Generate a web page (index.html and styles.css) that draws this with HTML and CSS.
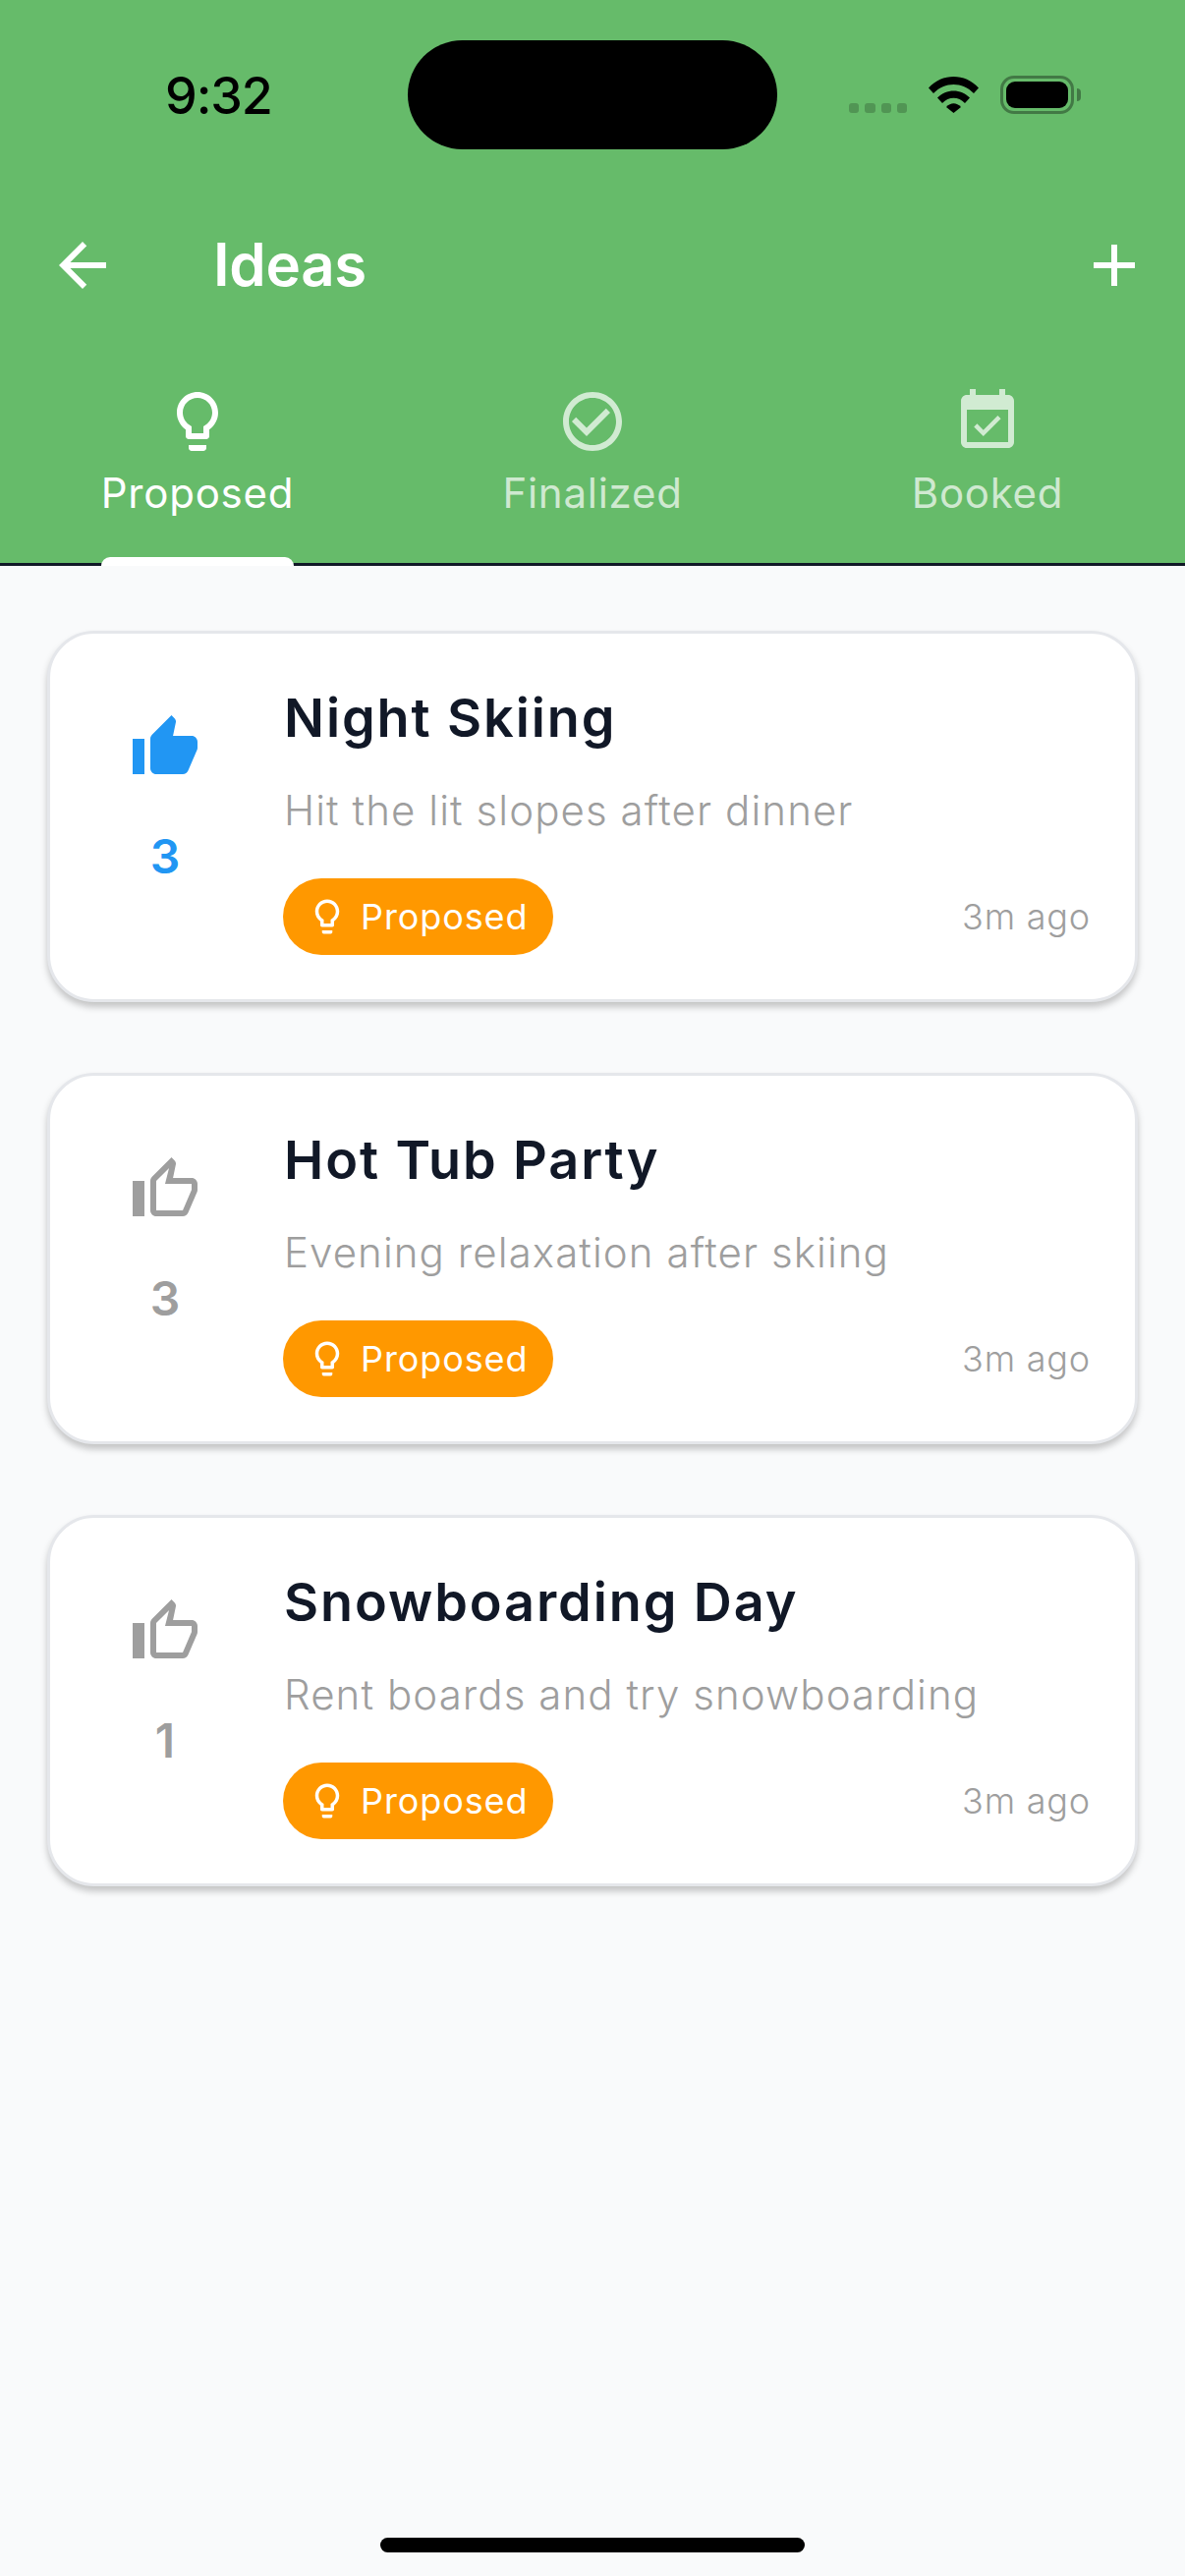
FILE: index.html
```html
<!DOCTYPE html>
<html lang="en">
<head>
<meta charset="utf-8">
<title>Ideas</title>
<link rel="stylesheet" href="styles.css">
</head>
<body>
<div class="page">
  <header class="header">
    <div class="status">
      <span class="time">9:32</span>
      <div class="island"></div>
      <div class="sys">
        <div class="dots"><i></i><i></i><i></i><i></i></div>
        <svg class="wifi" viewBox="0 0 51 37"><path d="M0 11.5C14-3.8 37-3.8 51 11.5L46 17C34.5 5 16.5 5 5 17Z"/><path d="M9 21.5C18 12 33 12 42 21.5L37 27C30.5 20 20.5 20 14 27Z"/><path d="M18 31C22.5 26 28.5 26 33 31L25.5 37Z"/></svg>
        <div class="battery"><div class="battery-fill"></div></div>
        <div class="battery-cap"></div>
      </div>
    </div>
    <div class="appbar">
      <svg class="icon" viewBox="0 0 24 24"><path d="M20 11H7.83l5.59-5.59L12 4l-8 8 8 8 1.41-1.41L7.83 13H20v-2z"/></svg>
      <h1 class="title">Ideas</h1>
      <svg class="icon" viewBox="0 0 24 24"><path d="M19 13h-6v6h-2v-6H5v-2h6V5h2v6h6v2z"/></svg>
    </div>
    <nav class="tabs">
      <div class="tab tab-active">
        <svg class="icon" viewBox="0 0 24 24"><path d="M9 21c0 .55.45 1 1 1h4c.55 0 1-.45 1-1v-1H9v1zm3-19C8.14 2 5 5.14 5 9c0 2.38 1.19 4.47 3 5.74V17c0 .55.45 1 1 1h6c.55 0 1-.45 1-1v-2.26c1.81-1.27 3-3.36 3-5.74 0-3.86-3.14-7-7-7zm2.85 11.1l-.85.6V16h-4v-2.3l-.85-.6C7.8 12.16 7 10.63 7 9c0-2.76 2.24-5 5-5s5 2.24 5 5c0 1.63-.8 3.16-2.15 4.1z"/></svg>
        <span class="tab-label">Proposed</span>
        <div class="indicator"></div>
      </div>
      <div class="tab">
        <svg class="icon" viewBox="0 0 24 24"><path d="M16.59 7.58L10 14.17l-3.59-3.58L5 12l5 5 8-8zM12 2C6.48 2 2 6.48 2 12s4.48 10 10 10 10-4.48 10-10S17.52 2 12 2zm0 18c-4.42 0-8-3.58-8-8s3.58-8 8-8 8 3.58 8 8-3.58 8-8 8z"/></svg>
        <span class="tab-label">Finalized</span>
      </div>
      <div class="tab">
        <svg class="icon" viewBox="0 0 24 24"><path d="M16.53 11.06L15.47 10l-4.88 4.88-2.12-2.12-1.06 1.06L10.59 17l5.94-5.94zM19 3h-1V1h-2v2H8V1H6v2H5c-1.11 0-1.99.9-1.99 2L3 19c0 1.1.89 2 2 2h14c1.1 0 2-.9 2-2V5c0-1.1-.9-2-2-2zm0 16H5V8h14v11z"/></svg>
        <span class="tab-label">Booked</span>
      </div>
    </nav>
  </header>

  <main class="list">
    <article class="card">
      <div class="vote vote-on">
        <svg class="icon" viewBox="0 0 24 24"><path d="M1 21h4V9H1v12zm22-11c0-1.1-.9-2-2-2h-6.31l.95-4.57.03-.32c0-.41-.17-.79-.44-1.06L14.17 1 7.59 7.59C7.22 7.95 7 8.45 7 9v10c0 1.1.9 2 2 2h9c.83 0 1.54-.5 1.84-1.22l3.02-7.05c.09-.23.14-.47.14-.73v-2z"/></svg>
        <span class="count">3</span>
      </div>
      <div class="body">
        <h2 class="card-title">Night Skiing</h2>
        <p class="desc">Hit the lit slopes after dinner</p>
        <div class="meta">
          <span class="chip">
            <svg class="chip-icon" viewBox="0 0 24 24"><path d="M9 21c0 .55.45 1 1 1h4c.55 0 1-.45 1-1v-1H9v1zm3-19C8.14 2 5 5.14 5 9c0 2.38 1.19 4.47 3 5.74V17c0 .55.45 1 1 1h6c.55 0 1-.45 1-1v-2.26c1.81-1.27 3-3.36 3-5.74 0-3.86-3.14-7-7-7zm2.85 11.1l-.85.6V16h-4v-2.3l-.85-.6C7.8 12.16 7 10.63 7 9c0-2.76 2.24-5 5-5s5 2.24 5 5c0 1.63-.8 3.16-2.15 4.1z"/></svg>
            Proposed
          </span>
          <span class="ago">3m ago</span>
        </div>
      </div>
    </article>

    <article class="card">
      <div class="vote">
        <svg class="icon" viewBox="0 0 24 24"><path d="M9 21h9c.83 0 1.54-.5 1.84-1.22l3.02-7.05c.09-.23.14-.47.14-.73v-2c0-1.1-.9-2-2-2h-6.31l.95-4.57.03-.32c0-.41-.17-.79-.44-1.06L14.17 1 7.58 7.59C7.22 7.95 7 8.45 7 9v10c0 1.1.9 2 2 2zM9 9l4.34-4.34L12 10h9v2l-3 7H9V9zM1 9h4v12H1z"/></svg>
        <span class="count">3</span>
      </div>
      <div class="body">
        <h2 class="card-title">Hot Tub Party</h2>
        <p class="desc">Evening relaxation after skiing</p>
        <div class="meta">
          <span class="chip">
            <svg class="chip-icon" viewBox="0 0 24 24"><path d="M9 21c0 .55.45 1 1 1h4c.55 0 1-.45 1-1v-1H9v1zm3-19C8.14 2 5 5.14 5 9c0 2.38 1.19 4.47 3 5.74V17c0 .55.45 1 1 1h6c.55 0 1-.45 1-1v-2.26c1.81-1.27 3-3.36 3-5.74 0-3.86-3.14-7-7-7zm2.85 11.1l-.85.6V16h-4v-2.3l-.85-.6C7.8 12.16 7 10.63 7 9c0-2.76 2.24-5 5-5s5 2.24 5 5c0 1.63-.8 3.16-2.15 4.1z"/></svg>
            Proposed
          </span>
          <span class="ago">3m ago</span>
        </div>
      </div>
    </article>

    <article class="card">
      <div class="vote">
        <svg class="icon" viewBox="0 0 24 24"><path d="M9 21h9c.83 0 1.54-.5 1.84-1.22l3.02-7.05c.09-.23.14-.47.14-.73v-2c0-1.1-.9-2-2-2h-6.31l.95-4.57.03-.32c0-.41-.17-.79-.44-1.06L14.17 1 7.58 7.59C7.22 7.95 7 8.45 7 9v10c0 1.1.9 2 2 2zM9 9l4.34-4.34L12 10h9v2l-3 7H9V9zM1 9h4v12H1z"/></svg>
        <span class="count">1</span>
      </div>
      <div class="body">
        <h2 class="card-title">Snowboarding Day</h2>
        <p class="desc">Rent boards and try snowboarding</p>
        <div class="meta">
          <span class="chip">
            <svg class="chip-icon" viewBox="0 0 24 24"><path d="M9 21c0 .55.45 1 1 1h4c.55 0 1-.45 1-1v-1H9v1zm3-19C8.14 2 5 5.14 5 9c0 2.38 1.19 4.47 3 5.74V17c0 .55.45 1 1 1h6c.55 0 1-.45 1-1v-2.26c1.81-1.27 3-3.36 3-5.74 0-3.86-3.14-7-7-7zm2.85 11.1l-.85.6V16h-4v-2.3l-.85-.6C7.8 12.16 7 10.63 7 9c0-2.76 2.24-5 5-5s5 2.24 5 5c0 1.63-.8 3.16-2.15 4.1z"/></svg>
            Proposed
          </span>
          <span class="ago">3m ago</span>
        </div>
      </div>
    </article>
  </main>

  <div class="home-wrap"><div class="home-bar"></div></div>
</div>
</body>
</html>
```

FILE: styles.css
```css
* { box-sizing: border-box; }
html, body { margin: 0; padding: 0; }
body {
  font-family: Inter, "Liberation Sans", sans-serif;
  background: #f9fafb;
  color: #111827;
}
.page {
  width: 1206px;
  height: 2622px;
  display: flex;
  flex-direction: column;
}
.header {
  background: #66bb6a;
  border-bottom: 3px solid #111827;
  height: 576px;
  flex: none;
  color: #fff;
}
.status {
  display: flex;
  align-items: center;
  height: 152px;
  padding-top: 41px;
}
.time {
  width: 247px;
  margin-left: 168px;
  padding-top: 2px;
  font-size: 52px;
  font-weight: 500;
  letter-spacing: -1.1px;
  line-height: 109px;
  color: #000;
}
.island {
  width: 376px;
  height: 111px;
  border-radius: 56px;
  background: #000;
  flex: none;
}
.sys {
  display: flex;
  align-items: center;
  margin-left: 73px;
  height: 39px;
}
.dots {
  display: flex;
  gap: 6px;
  align-self: flex-end;
  width: 59px;
  height: 10px;
  margin-bottom: 1px;
}
.dots i {
  display: block;
  width: 10.25px;
  height: 10px;
  border-radius: 3px;
  background: rgba(0, 0, 0, 0.2);
}
.wifi {
  width: 51px;
  height: 37px;
  margin-left: 22px;
  fill: #000;
}
.battery {
  width: 75px;
  height: 39px;
  margin-left: 22px;
  padding: 3px 3px;
  border: 3px solid rgba(0, 0, 0, 0.35);
  border-radius: 14px;
}
.battery-fill {
  width: 100%;
  height: 100%;
  background: #000;
  border-radius: 9px;
}
.battery-cap {
  width: 4px;
  height: 13px;
  margin-left: 3px;
  border-radius: 0 6px 6px 0;
  background: rgba(0, 0, 0, 0.35);
}
.appbar {
  display: flex;
  align-items: center;
  height: 72px;
  margin-top: 82px;
  padding: 0 36px 0 48px;
}
.icon {
  width: 72px;
  height: 72px;
  fill: currentColor;
  flex: none;
  display: block;
}
.title {
  flex: 1;
  margin: 0 0 2px 97px;
  font-size: 60px;
  font-weight: 600;
  line-height: 70px;
  letter-spacing: -0.3px;
}
.tabs {
  display: grid;
  grid-template-columns: repeat(3, 1fr);
  margin-top: 87px;
}
.tab {
  position: relative;
  display: flex;
  flex-direction: column;
  align-items: center;
  height: 180px;
  color: rgba(255, 255, 255, 0.7);
}
.tab-active { color: #fff; }
.tab-label {
  margin-top: 10px;
  font-size: 42px;
  line-height: 53px;
  letter-spacing: 0.75px;
}
.indicator {
  position: absolute;
  left: 103px;
  bottom: -3px;
  width: 196px;
  height: 9px;
  border-radius: 9px 9px 0 0;
  background: #fff;
}
.list {
  flex: 1;
  display: flex;
  flex-direction: column;
  gap: 72px;
  padding: 66px 48px 0;
}
.card {
  display: flex;
  height: 378px;
  padding: 45px;
  background: #fff;
  border: 3px solid #e5e7eb;
  border-radius: 48px;
  box-shadow: 0 5px 7px rgba(0, 0, 0, 0.22);
}
.vote {
  width: 144px;
  flex: none;
  display: flex;
  flex-direction: column;
  align-items: center;
  padding-top: 35px;
  color: #9e9e9e;
}
.vote-on { color: #2196f3; }
.count {
  margin-top: 46px;
  font-size: 48px;
  font-weight: 600;
  line-height: 58px;
}
.body {
  flex: 1;
  margin-left: 48px;
  min-width: 0;
}
.card-title {
  margin: 0 0 0 1px;
  font-size: 54px;
  font-weight: 600;
  line-height: 82px;
  letter-spacing: 1.9px;
  color: #111827;
}
.desc {
  margin: 24px 0 0 1px;
  font-size: 42px;
  font-weight: 300;
  line-height: 58px;
  letter-spacing: 1.08px;
  color: #9e9e9e;
}
.meta {
  display: flex;
  justify-content: space-between;
  align-items: center;
  margin-top: 40px;
}
.chip {
  display: flex;
  align-items: center;
  gap: 13px;
  height: 78px;
  padding: 0 25.5px 0 24px;
  border-radius: 39px;
  background: #ff9800;
  color: #fff;
  font-size: 36px;
  letter-spacing: 0.9px;
}
.chip-icon {
  width: 42px;
  height: 42px;
  fill: currentColor;
  flex: none;
}
.ago {
  font-size: 36px;
  font-weight: 300;
  letter-spacing: 0.8px;
  color: #9e9e9e;
}
.home-wrap {
  flex: none;
  display: flex;
  justify-content: center;
  padding-bottom: 24px;
}
.home-bar {
  width: 432px;
  height: 15px;
  border-radius: 8px;
  background: #000;
}
```
